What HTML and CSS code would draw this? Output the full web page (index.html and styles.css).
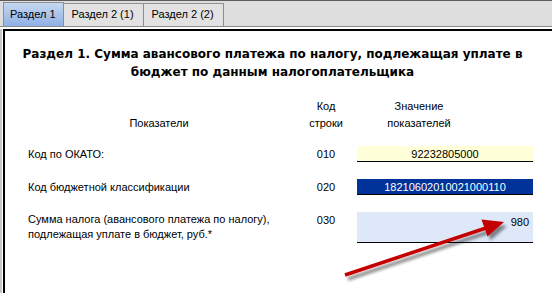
FILE: index.html
```html
<!DOCTYPE html>
<html lang="ru">
<head>
    <meta charset="UTF-8">
    <title>Раздел 1</title>
    <link rel="stylesheet" href="styles.css">
</head>
<body>
    <div class="tabs">
        <div class="tab active">Раздел 1</div>
        <div class="tab">Раздел 2 (1)</div>
        <div class="tab">Раздел 2 (2)</div>
    </div>
    <div class="frame">
        <div class="panel">
            <h1 class="title">Раздел 1. Сумма авансового платежа по налогу, подлежащая уплате в<br>бюджет по данным налогоплательщика</h1>

            <div class="grid head">
                <div class="h-name">Показатели</div>
                <div class="h-code">Код<br>строки</div>
                <div class="h-value">Значение<br>показателей</div>
            </div>

            <div class="grid row">
                <div class="name">Код по ОКАТО:</div>
                <div class="code">010</div>
                <div class="value okato">92232805000</div>
            </div>
            <div class="grid row">
                <div class="name">Код бюджетной классификации</div>
                <div class="code">020</div>
                <div class="value kbk">18210602010021000110</div>
            </div>
            <div class="grid row">
                <div class="name multi">Сумма налога (авансового платежа по налогу),<br>подлежащая уплате в бюджет, руб.*</div>
                <div class="code">030</div>
                <div class="value sum">980</div>
            </div>
        </div>
    </div>

    <svg class="arrow" width="552" height="293" viewBox="0 0 552 293">
        <defs>
            <filter id="shadow" x="-20%" y="-50%" width="140%" height="200%">
                <feDropShadow dx="3" dy="4" stdDeviation="1.6" flood-color="#000" flood-opacity="0.45"/>
            </filter>
        </defs>
        <g filter="url(#shadow)">
            <line x1="345" y1="275" x2="486" y2="228" stroke="#c40000" stroke-width="3.5"/>
            <polygon points="504,222 487.5,236.5 481.5,219.5" fill="#c40000"/>
        </g>
    </svg>
</body>
</html>
```

FILE: styles.css
```css
body {
    margin: 0;
    background-color: #ffffff;
    font-family: "Liberation Sans", Arial, sans-serif;
    font-size: 11px;
    color: #000000;
    position: relative;
    height: 293px;
    overflow: hidden;
}
.tabs {
    display: flex;
    height: 24px;
    padding-left: 3px;
    padding-top: 1px;
    background-color: #dedede;
    border-top: 1px solid #5c5c5c;
    border-bottom: 1px solid #8a8a8a;
}
.tab {
    box-sizing: border-box;
    height: 23px;
    margin-top: 1px;
    padding: 4px 9px 0 8px;
    border: 1px solid #8e8e8e;
    border-bottom: none;
    border-left: none;
    background-color: #e2e2e2;
    font-size: 11px;
}
.tab.active {
    height: 24px;
    margin-top: 0;
    padding: 5px 7px 0 6px;
    border-left: 1px solid #8e8e8e;
    background: linear-gradient(#c6d8f2, #8eb0e4);
}
.frame {
    margin-top: 2px;
    border-left: 2px solid #c8c8c8;
    padding-left: 1px;
    height: 265px;
}
.panel {
    border-left: 2px solid #000000;
    border-top: 2px solid #000000;
    height: 263px;
}
.title {
    margin: 14px 0 0 0;
    font-family: "DejaVu Sans", Verdana, sans-serif;
    font-size: 12px;
    font-weight: bold;
    line-height: 18px;
    text-align: center;
    padding-right: 12px;
}
.grid {
    display: grid;
    grid-template-columns: 301px 40px 187px;
    line-height: 17px;
}
.head {
    margin-top: 17px;
    align-items: end;
}
.h-name {
    padding-left: 7px;
    text-align: center;
}
.h-code {
    text-align: center;
}
.h-value {
    margin-left: 11px;
    padding-right: 52px;
    text-align: center;
}
.row {
    line-height: 16px;
    align-items: start;
}
.head + .row {
    margin-top: 14px;
}
.row + .row {
    margin-top: 17px;
}
.name {
    padding-left: 23px;
}
.name.multi {
    line-height: 15px;
}
.code {
    text-align: center;
}
.value {
    box-sizing: border-box;
    height: 16px;
    margin-left: 11px;
    border-bottom: 1px solid #000000;
    text-align: center;
}
.okato {
    background-color: #ffffd9;
}
.kbk {
    background-color: #003399;
    color: #ffffff;
}
.sum {
    height: 31px;
    padding-top: 2px;
    padding-right: 4px;
    background-color: #dfe8f8;
    text-align: right;
}
.arrow {
    position: absolute;
    left: 0;
    top: 0;
}
```
